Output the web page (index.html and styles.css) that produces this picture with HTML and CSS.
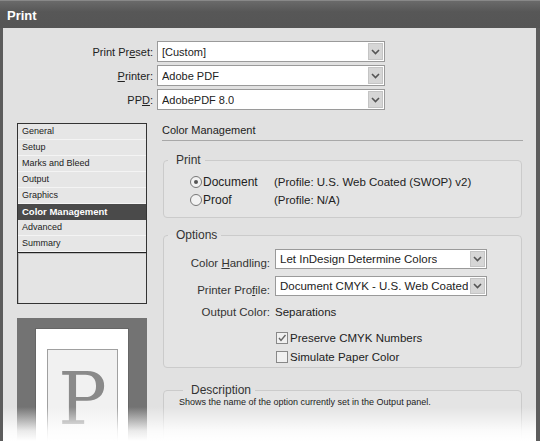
FILE: index.html
```html
<!DOCTYPE html>
<html>
<head>
<meta charset="utf-8">
<link rel="stylesheet" href="styles.css">
</head>
<body>
<div class="window">
  <div class="titlebar">Print</div>
  <div class="content">
    <div class="top-form">
      <label class="lbl">Print Pr<u>e</u>set:</label>
      <div class="select"><span class="sel-text">[Custom]</span><span class="arrow"><svg width="9" height="6" viewBox="0 0 9 6"><path d="M1 1 L4.5 4.5 L8 1" fill="none" stroke="#555" stroke-width="1.6"/></svg></span></div>
      <label class="lbl"><u>P</u>rinter:</label>
      <div class="select"><span class="sel-text">Adobe PDF</span><span class="arrow"><svg width="9" height="6" viewBox="0 0 9 6"><path d="M1 1 L4.5 4.5 L8 1" fill="none" stroke="#555" stroke-width="1.6"/></svg></span></div>
      <label class="lbl">PP<u>D</u>:</label>
      <div class="select"><span class="sel-text">AdobePDF 8.0</span><span class="arrow"><svg width="9" height="6" viewBox="0 0 9 6"><path d="M1 1 L4.5 4.5 L8 1" fill="none" stroke="#555" stroke-width="1.6"/></svg></span></div>
    </div>

    <div class="main">
      <div class="left">
        <ul class="nav">
          <li>General</li>
          <li>Setup</li>
          <li>Marks and Bleed</li>
          <li>Output</li>
          <li>Graphics</li>
          <li class="active">Color Management</li>
          <li>Advanced</li>
          <li>Summary</li>
        </ul>
        <div class="nav-empty"></div>
        <div class="preview">
          <div class="page">
            <div class="page-inner"><span class="big-p">P</span></div>
          </div>
        </div>
      </div>

      <div class="right">
        <div class="heading">Color Management</div>

        <fieldset class="group print-group">
          <legend>Print</legend>
          <div class="radio-row">
            <span class="radio checked"></span><span class="radio-label">Document</span><span class="profile">(Profile: U.S. Web Coated (SWOP) v2)</span>
          </div>
          <div class="radio-row">
            <span class="radio"></span><span class="radio-label">Proof</span><span class="profile">(Profile: N/A)</span>
          </div>
        </fieldset>

        <fieldset class="group options-group">
          <legend>Options</legend>
          <div class="opt-grid">
            <label class="olbl">Color <u>H</u>andling:</label>
            <div class="select small"><span class="sel-text">Let InDesign Determine Colors</span><span class="arrow"><svg width="9" height="6" viewBox="0 0 9 6"><path d="M1 1 L4.5 4.5 L8 1" fill="none" stroke="#555" stroke-width="1.6"/></svg></span></div>
            <label class="olbl">Printer Pro<u>f</u>ile:</label>
            <div class="select small"><span class="sel-text">Document CMYK - U.S. Web Coated</span><span class="arrow"><svg width="9" height="6" viewBox="0 0 9 6"><path d="M1 1 L4.5 4.5 L8 1" fill="none" stroke="#555" stroke-width="1.6"/></svg></span></div>
            <label class="olbl out">Output Color:</label>
            <span class="out-val">Separations</span>
            <span></span>
            <div class="check-row"><span class="checkbox"><svg width="10" height="10" viewBox="0 0 10 10"><path d="M2 5 L4 7.5 L8.5 2" fill="none" stroke="#666" stroke-width="1.4"/></svg></span>Preserve CMYK Numbers</div>
            <span></span>
            <div class="check-row"><span class="checkbox"></span>Simulate Paper Color</div>
          </div>
        </fieldset>

        <fieldset class="group desc-group">
          <legend>Description</legend>
          <div class="desc">Shows the name of the option currently set in the Output panel.</div>
        </fieldset>
      </div>
    </div>
    <div class="fade"></div>
  </div>
</div>
</body>
</html>
```
FILE: styles.css
```css
* { box-sizing: border-box; }
html, body {
  margin: 0;
  padding: 0;
  width: 540px;
  height: 441px;
  overflow: hidden;
  background: #fff;
}
body {
  font-family: "Liberation Sans", Arial, sans-serif;
  font-size: 11px;
  color: #222;
}
.window {
  width: 540px;
  height: 441px;
  display: flex;
  flex-direction: column;
  background: #5c5c5c;
  padding: 0 4px 0 3px;
  position: relative;
}
.titlebar {
  height: 28px;
  line-height: 30px;
  color: #fff;
  font-weight: bold;
  font-size: 13px;
  background: linear-gradient(#6a6a6a, #575757 40%, #555);
  margin: 0 -4px 0 -3px;
  padding-left: 7px;
  border-top: 1px solid #888;
}
.content {
  flex: 1;
  background: #e1e1e1;
  position: relative;
  overflow: hidden;
}
u { text-decoration: underline; text-underline-offset: 1px; }

.top-form {
  display: grid;
  grid-template-columns: 150px 228px;
  column-gap: 4px;
  row-gap: 3px;
  padding-top: 13px;
  align-items: center;
}
.lbl {
  text-align: right;
  color: #222;
}
.select {
  height: 21px;
  background: #fff;
  border: 1px solid #9a9a9a;
  display: flex;
  align-items: center;
  justify-content: space-between;
  padding: 1px 1px 1px 4px;
}
.sel-text { white-space: nowrap; overflow: hidden; }
.arrow {
  width: 15px;
  height: 17px;
  background: #d6d6d6;
  border: 1px solid #c4c4c4;
  display: flex;
  align-items: center;
  justify-content: center;
  flex: none;
}

.main {
  display: flex;
  margin-top: 13px;
  padding-left: 14px;
}
.left {
  width: 130px;
  flex: none;
}
.nav {
  list-style: none;
  margin: 0;
  padding: 0;
  border: 1px solid #333;
  border-bottom: none;
  background: #e6e6e6;
}
.nav li {
  height: 16px;
  line-height: 15px;
  font-size: 9px;
  padding-left: 4px;
  border-bottom: 1px solid #f4f4f4;
  color: #222;
}
.nav li.active {
  background: #4a4a4a;
  color: #fff;
  font-weight: bold;
  font-size: 9.5px;
  border-bottom-color: #4a4a4a;
}
.nav-empty {
  height: 52px;
  border: 1px solid #333;
  border-top: 1px solid #222;
  background: #e4e4e4;
  box-shadow: inset 1px 1px 0 #bbb;
}
.preview {
  margin-top: 14px;
  height: 130px;
  background: #737373;
  padding: 10px 18px 0 18px;
}
.page {
  background: #fff;
  height: 120px;
  border: 1px solid #666;
  border-bottom: none;
  padding: 20px 10px 0 11px;
}
.page-inner {
  height: 100px;
  border: 1px solid #a0a0a0;
  border-bottom: none;
  background: #f1f1f1;
  display: flex;
  justify-content: center;
  padding-top: 19px;
}
.big-p {
  font-family: "DejaVu Serif", "Liberation Serif", serif;
  font-weight: normal;
  font-size: 72px;
  line-height: 60px;
  color: #8a8a8a;
}

.right {
  margin-left: 15px;
  width: 361px;
}
.heading {
  font-size: 11px;
  padding-top: 1px;
  height: 18px;
  border-bottom: 1px solid #a8a8a8;
  color: #222;
}
.group {
  margin: 0;
  border: 1px solid #cbcbcb;
  border-radius: 4px;
  margin-left: 1px;
  width: 359px;
  background: #e4e4e4;
  padding: 0;
}
.group legend {
  padding: 0 4px 0 8px;
  margin-left: 4px;
  font-size: 12px;
  color: #333;
  line-height: 14px;
}
.print-group {
  margin-top: 12px;
  height: 65px;
  padding: 6px 0 0 0;
}
.radio-row {
  display: flex;
  align-items: center;
  height: 18px;
  padding-left: 26px;
}
.radio {
  width: 12px;
  height: 12px;
  border-radius: 50%;
  border: 1px solid #777;
  background: #f2f2f2;
  flex: none;
  position: relative;
}
.radio.checked::after {
  content: "";
  position: absolute;
  left: 3px;
  top: 3px;
  width: 4px;
  height: 4px;
  border-radius: 50%;
  background: #555;
}
.radio-label {
  width: 72px;
  padding-left: 1px;
  font-size: 12px;
}
.profile { font-size: 11.5px; }

.options-group {
  margin-top: 10px;
  height: 140px;
  padding: 7px 0 0 0;
}
.opt-grid {
  display: grid;
  grid-template-columns: 106px 212px;
  column-gap: 5px;
  align-items: center;
  row-gap: 0;
}
.olbl {
  text-align: right;
  font-size: 11.5px;
  color: #333;
}
.select.small {
  height: 20px;
  margin-bottom: 7px;
  font-size: 11.5px;
}
.select.small .arrow { height: 16px; }
.out { padding-top: 3px; height: 25px; }
.out-val { padding-top: 3px; height: 25px; font-size: 11.5px; }
.check-row {
  display: flex;
  align-items: center;
  height: 19px;
  font-size: 11.5px;
  margin-left: 1px;
}
.checkbox {
  width: 12px;
  height: 12px;
  border: 1px solid #888;
  background: #f0f0f0;
  margin-right: 2px;
  display: flex;
  align-items: center;
  justify-content: center;
}
.desc-group {
  margin-top: 15px;
  height: 80px;
  padding: 0 0 0 15px;
}
.desc {
  font-size: 9px;
  color: #222;
}
.fade {
  position: absolute;
  left: -3px;
  right: -4px;
  bottom: 0;
  height: 34px;
  background: linear-gradient(rgba(255,255,255,0), rgba(255,255,255,0.85) 70%, #fff);
}
```
